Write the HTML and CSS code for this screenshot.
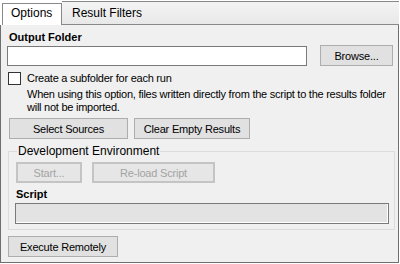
FILE: index.html
```html
<!DOCTYPE html>
<html lang="en">
<head>
    <title>Options</title>
    <link rel="stylesheet" href="styles.css">
</head>
<body>
<div class="window">
    <div class="tabs">
        <div class="tab active">Options</div>
        <div class="tab">Result Filters</div>
    </div>
    <div class="panel">
        <div class="label">Output Folder</div>
        <div class="folderRow">
            <input type="text" class="textBox">
            <button class="btn browse">Browse...</button>
        </div>
        <label class="checkRow">
            <span class="checkBox"></span>
            <span>Create a subfolder for each run</span>
        </label>
        <div class="hint">When using this option, files written directly from the script to the results folder will not be imported.</div>
        <div class="buttonRow">
            <button class="btn sources">Select Sources</button>
            <button class="btn clear">Clear Empty Results</button>
        </div>
        <fieldset class="group">
            <legend>Development Environment</legend>
            <div class="buttonRow inner">
                <button class="btn start" disabled>Start...</button>
                <button class="btn reload" disabled>Re-load Script</button>
            </div>
            <div class="label script">Script</div>
            <div class="scriptBox"></div>
        </fieldset>
        <button class="btn execute">Execute Remotely</button>
    </div>
</div>
</body>
</html>
```

FILE: styles.css
```css
body {
    margin: 0;
    padding: 0;
    background: #ffffff;
    font-family: "Liberation Sans", Arial, sans-serif;
    font-size: 11px;
    letter-spacing: -0.25px;
    color: #000000;
}

.window {
    width: 399px;
    height: 263px;
    display: flex;
    flex-direction: column;
}

.tabs {
    display: flex;
    height: 25px;
    align-items: flex-end;
}

.tab {
    box-sizing: border-box;
    height: 24px;
    padding: 4px 0 0 10px;
    font-size: 12px;
    letter-spacing: 0;
    border-top: 1px solid #898989;
    border-bottom: 1px solid #898989;
    background: linear-gradient(#f4f4f4, #e8e8e8);
    flex: 1;
}

.tab.active {
    flex: none;
    width: 60px;
    height: 22px;
    margin-left: 2px;
    padding: 2px 0 0 8px;
    background: #ffffff;
    border: 1px solid #898989;
    border-bottom: none;
}

.panel {
    flex: 1;
    display: flex;
    flex-direction: column;
    align-items: flex-start;
    background: #f0f0f0;
    border: 1px solid #6f6f6f;
    border-top: none;
    padding: 6px 0 0 6px;
}

.label {
    font-weight: bold;
    font-size: 11px;
    letter-spacing: 0;
    line-height: 13px;
    margin-left: 2px;
}

.folderRow {
    display: flex;
    gap: 13px;
    margin-top: 1px;
    align-items: flex-start;
}

.textBox {
    box-sizing: border-box;
    width: 300px;
    height: 20px;
    margin: 1px 0 0;
    border: 1px solid #7a7a7a;
    background: #ffffff;
}

.btn {
    box-sizing: border-box;
    height: 21px;
    padding: 0;
    font-family: "Liberation Sans", Arial, sans-serif;
    font-size: 11px;
    letter-spacing: -0.2px;
    color: #000000;
    background: #e1e1e1;
    border: 1px solid #adadad;
    border-radius: 0;
}

.btn:disabled {
    color: #a3a3a3;
    background: #e6e6e6;
    border: 2px solid #c4c4c4;
}

.browse {
    width: 73px;
}

.checkRow {
    display: flex;
    align-items: center;
    gap: 6px;
    margin-top: 6px;
    margin-left: 1px;
    line-height: 13px;
}

.checkBox {
    box-sizing: border-box;
    width: 13px;
    height: 13px;
    border: 1px solid #333333;
    background: #ffffff;
}

.hint {
    width: 372px;
    margin: 3px 0 0 20px;
    line-height: 13px;
}

.buttonRow {
    display: flex;
    gap: 6px;
    margin: 4px 0 0 2px;
}

.sources {
    width: 119px;
}

.clear {
    width: 116px;
}

.group {
    box-sizing: border-box;
    width: 387px;
    height: 86px;
    margin: 5px 0 0 1px;
    padding: 0 0 0 7px;
    border: 1px solid #dcdcdc;
}

.group legend {
    font-size: 12px;
    letter-spacing: 0;
    line-height: 14px;
    padding: 0 1px;
    margin-left: 1px;
}

.buttonRow.inner {
    gap: 10px;
    margin: 4px 0 0 0;
}

.start {
    width: 66px;
}

.reload {
    width: 123px;
}

.label.script {
    margin: 5px 0 0 0;
}

.scriptBox {
    box-sizing: border-box;
    width: 374px;
    height: 21px;
    margin-top: 2px;
    margin-left: -1px;
    background: #e3e3e3;
    border: 1px solid #7a7a7a;
    box-shadow: inset -1px -1px 0 #ffffff;
}

.execute {
    width: 110px;
    margin: 6px 0 0 1px;
}
```
